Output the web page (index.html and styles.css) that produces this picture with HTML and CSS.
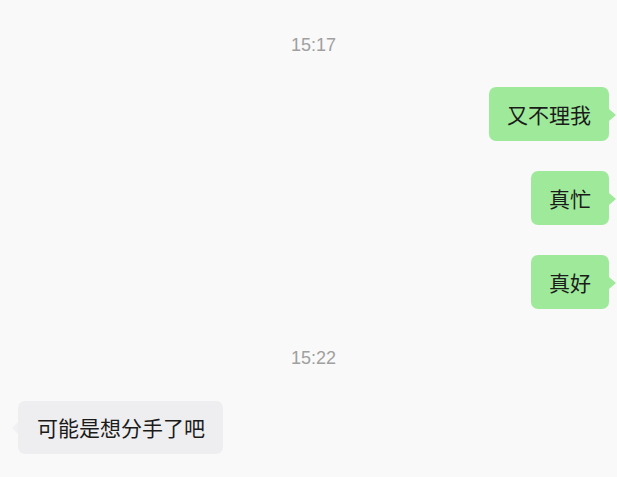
FILE: index.html
```html
<!DOCTYPE html>
<html lang="zh">
<head>
<meta charset="utf-8">
<link rel="stylesheet" href="styles.css">
</head>
<body>
<div class="chat">
  <div class="time t1">15:17</div>
  <div class="row right first"><div class="bubble me">又不理我</div></div>
  <div class="row right"><div class="bubble me">真忙</div></div>
  <div class="row right"><div class="bubble me">真好</div></div>
  <div class="time t2">15:22</div>
  <div class="row left"><div class="bubble other">可能是想分手了吧</div></div>
</div>
</body>
</html>
```
FILE: styles.css
```css
html, body {
  margin: 0;
  padding: 0;
  background: #f9f9f9;
  width: 617px;
  height: 477px;
  overflow: hidden;
}
.chat {
  display: flex;
  flex-direction: column;
  padding: 35px 8px 0 18px;
  font-family: "Noto Sans CJK SC", "Microsoft YaHei", sans-serif;
}
.time {
  height: 20px;
  line-height: 20px;
  font-size: 18px;
  color: #a0a0a0;
  text-align: center;
  font-family: "Liberation Sans", "Noto Sans CJK SC", sans-serif;
}
.t2 {
  margin-top: 39px;
}
.row {
  display: flex;
  margin-top: 30px;
}
.row.first {
  margin-top: 32px;
}
.row.left {
  margin-top: 33px;
}
.right {
  justify-content: flex-end;
}
.left {
  justify-content: flex-start;
}
.bubble {
  position: relative;
  height: 54px;
  line-height: 54px;
  padding: 0 18px;
  font-size: 21px;
  color: #1b1b1b;
  border-radius: 7px;
  box-sizing: border-box;
}
.me {
  background: #9eea9a;
}
.me::after {
  content: "";
  position: absolute;
  right: -7px;
  top: 22px;
  border-left: 7px solid #9eea9a;
  border-top: 6px solid transparent;
  border-bottom: 6px solid transparent;
}
.other {
  background: #eeeef0;
  padding: 0 18px 0 19px;
  height: 53px;
  line-height: 53px;
}
.other::before {
  content: "";
  position: absolute;
  left: -6px;
  top: 21px;
  border-right: 6px solid #f1f1f3;
  border-top: 6px solid transparent;
  border-bottom: 6px solid transparent;
}
```
